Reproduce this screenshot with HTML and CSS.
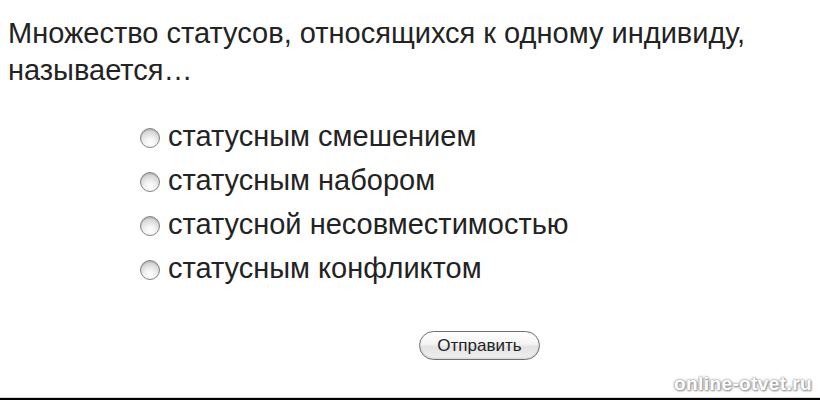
FILE: index.html
```html
<!DOCTYPE html>
<html lang="ru">
<head>
<meta charset="utf-8">
<link rel="stylesheet" href="styles.css">
</head>
<body>
<div class="page">
  <p class="question">Множество статусов, относящихся к одному индивиду,<br>называется…</p>
  <ul class="options">
    <li class="option"><span class="radio"></span><span>статусным смешением</span></li>
    <li class="option"><span class="radio"></span><span>статусным набором</span></li>
    <li class="option"><span class="radio"></span><span>статусной несовместимостью</span></li>
    <li class="option"><span class="radio"></span><span>статусным конфликтом</span></li>
  </ul>
  <div class="actions"><button class="submit" type="button">Отправить</button></div>
  <div class="watermark">online-otvet.ru</div>
  <div class="bottom-bar"></div>
</div>
</body>
</html>
```
FILE: styles.css
```css
html, body {
  margin: 0;
  padding: 0;
  background: #ffffff;
}
.page {
  position: relative;
  width: 820px;
  height: 400px;
  overflow: hidden;
  font-family: "Liberation Sans", Arial, sans-serif;
  color: #232323;
}
.question {
  margin: 0;
  padding: 15px 0 0 8px;
  font-size: 29px;
  line-height: 37px;
  white-space: nowrap;
}
.options {
  list-style: none;
  margin: 25px 0 0 0;
  padding: 0 0 0 140px;
}
.option {
  display: flex;
  align-items: center;
  gap: 8px;
  height: 44px;
  font-size: 29px;
  line-height: 44px;
}
.radio {
  width: 18px;
  height: 18px;
  border-radius: 50%;
  border: 1px solid #858585;
  background: radial-gradient(circle at 50% 78%, #ffffff 0%, #f4f4f4 30%, #d6d6d6 70%, #b8b8b8 100%);
  box-shadow: inset 0 1px 1px rgba(0,0,0,0.18);
  flex: none;
  margin-top: 4px;
}
.actions {
  padding: 41px 0 0 419px;
}
.submit {
  width: 121px;
  height: 29px;
  border: 1px solid #6f6f6f;
  border-radius: 15px;
  background: linear-gradient(#ffffff 0%, #f4f4f4 45%, #e2e2e2 55%, #f0f0f0 100%);
  box-shadow: inset 0 -1px 2px rgba(0,0,0,0.12);
  font-family: "Liberation Sans", Arial, sans-serif;
  font-size: 17px;
  color: #222;
  padding: 0;
}
.watermark {
  position: absolute;
  right: 8px;
  bottom: 6px;
  font-family: "Liberation Sans", Arial, sans-serif;
  font-weight: bold;
  font-size: 19px;
  line-height: 20px;
  color: #ffffff;
  letter-spacing: 0.4px;
  text-shadow: 0 0 2px #8f8f8f, 0 0 3px #a8a8a8, 1px 1px 2px #8c8c8c;
}
.bottom-bar {
  position: absolute;
  left: 0;
  right: 0;
  bottom: 0;
  height: 2px;
  background: #000;
  border-top: 1px solid #d8d8d8;
}
```
